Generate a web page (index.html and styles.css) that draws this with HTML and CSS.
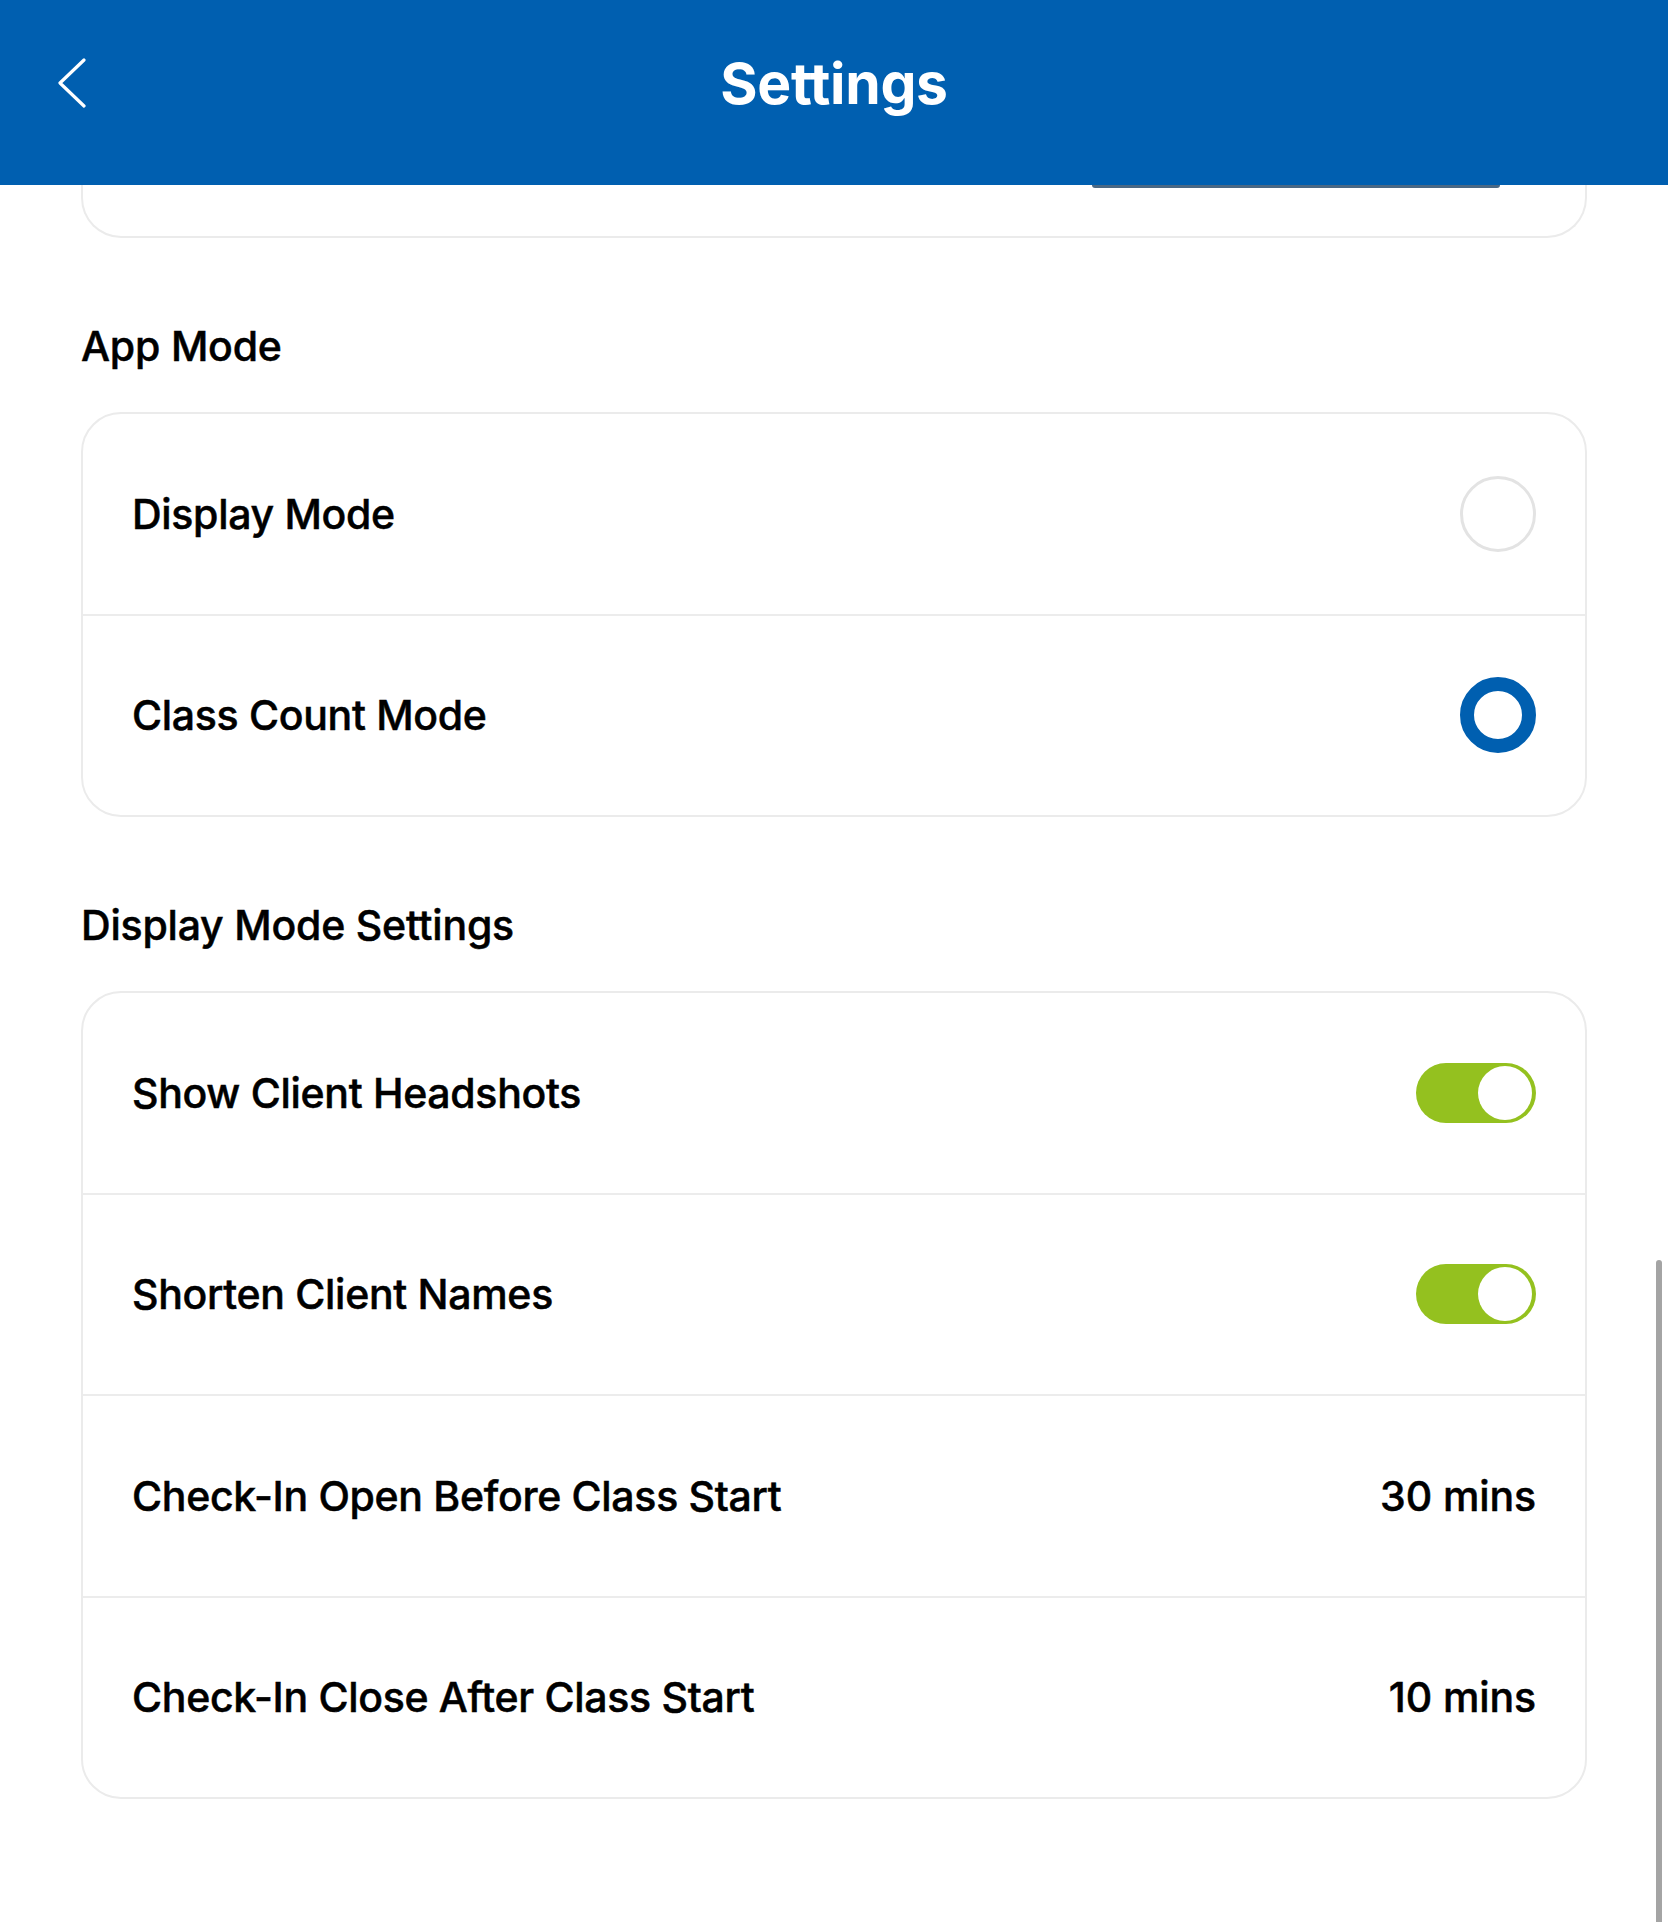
FILE: index.html
```html
<!DOCTYPE html>
<html lang="en">
<head>
<meta charset="utf-8">
<title>Settings</title>
<link rel="stylesheet" href="styles.css">
</head>
<body>
<div class="screen">
  <header class="topbar">
    <div class="topbar-left">
      <svg class="back" width="30" height="52" viewBox="0 0 30 52" aria-hidden="true">
        <polyline points="26,2 2,25 26,48" fill="none" stroke="#ffffff" stroke-width="3.2" stroke-linecap="round" stroke-linejoin="round"/>
      </svg>
    </div>
    <h1 class="title">Settings</h1>
    <div class="topbar-right"></div>
  </header>

  <div class="card-tail">
    <div class="peek-bar"></div>
  </div>

  <h2 class="section-title">App Mode</h2>
  <div class="card">
    <div class="row">
      <span class="label">Display Mode</span>
      <span class="radio"></span>
    </div>
    <div class="row">
      <span class="label">Class Count Mode</span>
      <span class="radio radio-on"></span>
    </div>
  </div>

  <h2 class="section-title">Display Mode Settings</h2>
  <div class="card">
    <div class="row">
      <span class="label">Show Client Headshots</span>
      <span class="toggle"><span class="knob"></span></span>
    </div>
    <div class="row">
      <span class="label">Shorten Client Names</span>
      <span class="toggle"><span class="knob"></span></span>
    </div>
    <div class="row">
      <span class="label">Check-In Open Before Class Start</span>
      <span class="value">30 mins</span>
    </div>
    <div class="row">
      <span class="label">Check-In Close After Class Start</span>
      <span class="value">10 mins</span>
    </div>
  </div>

  <div class="scrollbar"></div>
</div>
</body>
</html>
```

FILE: styles.css
```css
html, body {
  margin: 0;
  padding: 0;
  background: #ffffff;
}

body {
  font-family: Inter, "Noto Sans", "Liberation Sans", sans-serif;
  color: #000000;
}

.screen {
  position: relative;
  width: 1668px;
  height: 1922px;
  overflow: hidden;
  background: #ffffff;
}

.topbar {
  height: 185px;
  box-sizing: border-box;
  padding-bottom: 17px;
  background: #005fb0;
  display: grid;
  grid-template-columns: 1fr auto 1fr;
  align-items: center;
}

.topbar-left {
  padding-left: 58px;
  display: flex;
  align-items: center;
}

.back {
  display: block;
}

.title {
  margin: 0;
  font-size: 57px;
  line-height: 64px;
  font-weight: 700;
  color: #ffffff;
  letter-spacing: -0.3px;
}

.card-tail {
  margin: 0 81px;
  height: 53px;
  box-sizing: border-box;
  border: 2px solid #ebebeb;
  border-top: none;
  border-radius: 0 0 40px 40px;
  background: #ffffff;
}

.peek-bar {
  margin-left: 1009px;
  width: 408px;
  height: 3px;
  background: #4a6884;
  border-radius: 0 0 3px 3px;
}

.section-title {
  margin: 84px 81px 42px;
  font-size: 41px;
  line-height: 48px;
  font-weight: 500;
  letter-spacing: -0.2px;
  -webkit-text-stroke: 0.5px #000000;
}

.card {
  margin: 0 81px;
  border: 2px solid #ebebeb;
  border-radius: 40px;
  background: #ffffff;
  overflow: hidden;
}

.row {
  height: 199.5px;
  padding: 0 49px;
  display: flex;
  align-items: center;
  justify-content: space-between;
  border-top: 2px solid #ececec;
}

.row:first-child {
  border-top: none;
}

.label,
.value {
  font-size: 41px;
  line-height: 50px;
  font-weight: 500;
  letter-spacing: -0.3px;
  -webkit-text-stroke: 0.5px #000000;
}

.value {
  letter-spacing: -0.1px;
}

.radio {
  width: 76px;
  height: 76px;
  box-sizing: border-box;
  border-radius: 50%;
  border: 3px solid #e3e3e3;
}

.radio-on {
  border: 14px solid #005fb0;
}

.toggle {
  position: relative;
  width: 120px;
  height: 60px;
  border-radius: 30px;
  background: #94c11f;
}

.knob {
  position: absolute;
  top: 3px;
  right: 4px;
  width: 54px;
  height: 54px;
  border-radius: 50%;
  background: #ffffff;
}

.scrollbar {
  position: absolute;
  right: 6px;
  top: 1260px;
  width: 6px;
  height: 680px;
  border-radius: 3px;
  background: #a4a4a4;
}
```
